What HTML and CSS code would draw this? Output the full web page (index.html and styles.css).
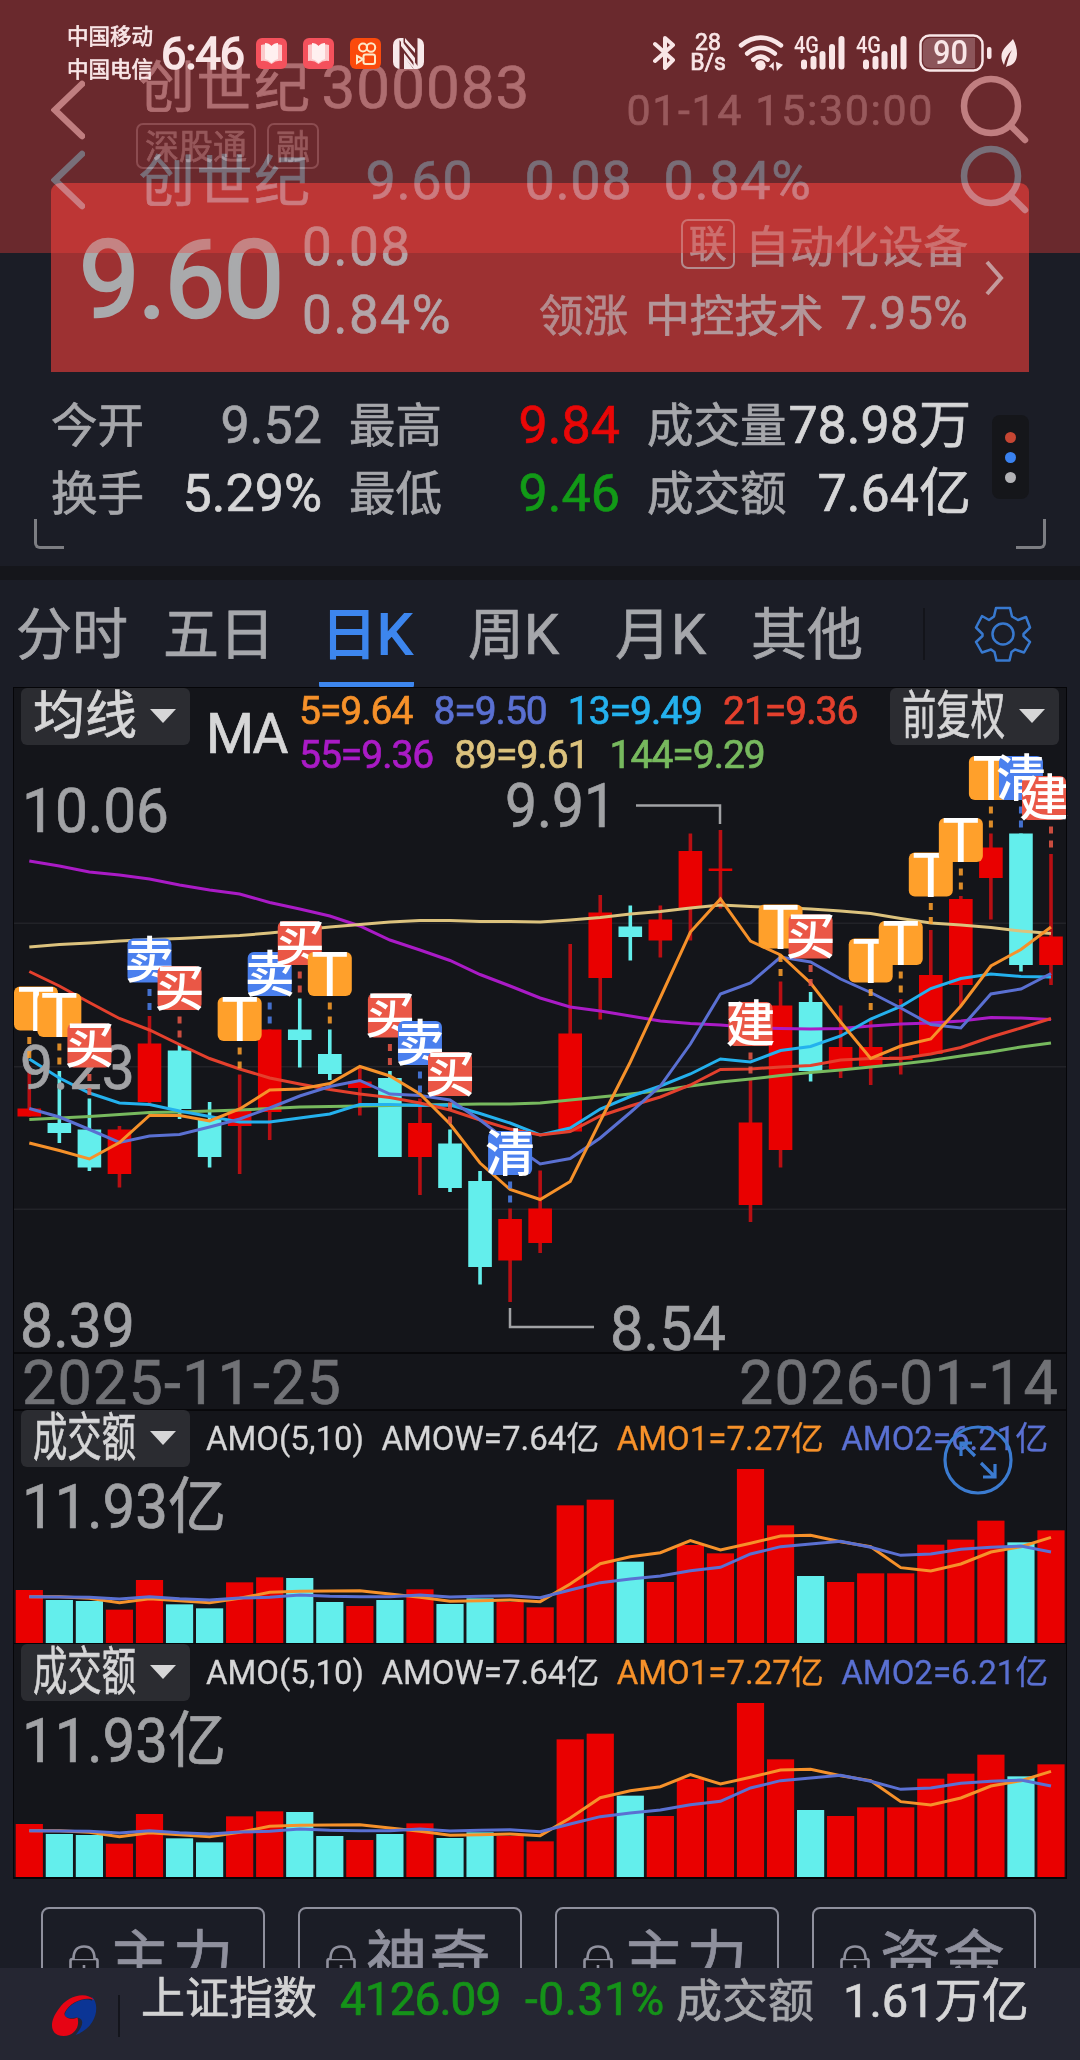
FILE: index.html
```html
<!DOCTYPE html>
<html lang="zh-CN">
<head>
  <meta charset="UTF-8">
  <title>创世纪 300083</title>
  <link rel="stylesheet" href="styles.css">
</head>
<body>
  <div class="statusbar">
    <div class="carriers"><span>中国移动</span><span>中国电信</span></div>
    <span class="clock">6:46</span>
    <div class="apps">
      <svg class="app" viewBox="0 0 31 31"><rect width="31" height="31" rx="6" fill="#f4515c"/><path d="M5 7 Q11 5 15.5 8 Q20 5 26 7 V23 Q20 22 15.5 26 Q11 22 5 23Z" fill="#fcc9cb"/><path d="M9 5 Q13 5 15.5 8 Q18 5 22 5 V21 Q18 22 15.5 25 Q13 22 9 21Z" fill="#fff0f0"/></svg>
      <svg class="app" viewBox="0 0 31 31"><rect width="31" height="31" rx="6" fill="#f4515c"/><path d="M5 7 Q11 5 15.5 8 Q20 5 26 7 V23 Q20 22 15.5 26 Q11 22 5 23Z" fill="#fcc9cb"/><path d="M9 5 Q13 5 15.5 8 Q18 5 22 5 V21 Q18 22 15.5 25 Q13 22 9 21Z" fill="#fff0f0"/></svg>
      <svg class="app" viewBox="0 0 31 31"><rect width="31" height="31" rx="6" fill="#fb4a0c"/><g fill="none" stroke="#fde9c8" stroke-width="2"><circle cx="13" cy="9.5" r="4"/><circle cx="21" cy="9.5" r="4.2"/><rect x="13.500" y="16.500" width="11.500" height="9.500" rx="2"/><path d="M7 18 L13 21 L7 25Z"/></g></svg>
      <svg class="app nfc" viewBox="0 0 31 31"><rect width="31" height="31" rx="7" fill="#f7e9ea"/><path d="M6.500 2 L20.500 21 V31 L11 18 V31 H6.500Z" fill="#6a2a2e"/><path d="M10.500 0 H24.500 V28 L10.500 8Z" fill="#6a2a2e"/><path d="M8 2 L22 20 V26 L8 8Z M12 0 L22 11 V15 L12 4Z M11 15 L21 28 V31 L11 19Z" fill="#f7e9ea"/></svg>
    </div>
    <div class="signals">
      <svg class="bt" viewBox="0 0 22 36"><path d="M2 9 L20 25 L12 33 V3 L20 10 L2 26" fill="none" stroke="#f9e6e7" stroke-width="4" stroke-linejoin="round" stroke-linecap="round"/></svg>
      <div class="speed"><span>28</span><span>B/s</span></div>
      <svg class="wifi" viewBox="0 0 45 35"><g fill="none" stroke="#f9e6e7" stroke-width="4.500" stroke-linecap="round"><path d="M3 10 Q22 -5 42 10"/><path d="M9 18 Q22 7 36 18"/><path d="M15 24 Q22 18 29 24"/></g><circle cx="22" cy="29.500" r="5" fill="#f9e6e7"/><path d="M30 31 L35 26 V35 L33 32Z M37 26 L44 29 L38 35Z" fill="#f9e6e7"/></svg>
      <svg class="cell" viewBox="0 0 52 36"><text x="0" y="18" textLength="25" lengthAdjust="spacingAndGlyphs">4G</text><path d="M10 27.500V31.500 M19.500 24V31.500 M28.500 19V31.500 M38 12V31.500 M47.500 4V31.500" stroke="#f9e6e7" stroke-width="6" stroke-linecap="round"/></svg>
      <svg class="cell" viewBox="0 0 52 36"><text x="0" y="18" textLength="25" lengthAdjust="spacingAndGlyphs">4G</text><path d="M10 27.500V31.500 M19.500 24V31.500 M28.500 19V31.500 M38 12V31.500 M47.500 4V31.500" stroke="#f9e6e7" stroke-width="6" stroke-linecap="round"/></svg>
      <svg class="battery" viewBox="0 0 74 38"><rect x="1.500" y="1.500" width="62" height="35" rx="9" fill="none" stroke="#f9e6e7" stroke-width="2.500"/><path d="M12 4 H56 V34 H12 Q4 34 4 26 V12 Q4 4 12 4" fill="#8c555a"/><text x="14" y="30" textLength="35" lengthAdjust="spacingAndGlyphs">90</text><rect x="68" y="13" width="4.500" height="12" rx="2" fill="#f9e6e7"/></svg>
      <svg class="leaf" viewBox="0 0 18 30"><path d="M13 1 C19 12 19 26 8 28 L6 29 C8 22 9 17 12 12 C7 17 5 22 4 27 C-3 14 6 9 13 1Z" fill="#f9e6e7"/></svg>
    </div>
  </div>

  <div class="titlebar">
    <svg class="back" viewBox="0 0 34 60"><path d="M31 4 L4 30 L31 56"/></svg>
    <div class="name-box">
      <div class="name">创世纪<span class="code">300083</span></div>
      <div class="tags"><span class="tag">深股通</span><span class="tag">融</span></div>
    </div>
    <span class="datetime">01-14 15:30:00</span>
    <svg class="search" viewBox="0 0 70 70"><circle cx="31" cy="31" r="27"/><path d="M51 51 L65 65"/></svg>
  </div>

  <div class="titlebar ghost">
    <svg class="back" viewBox="0 0 34 60"><path d="M31 4 L4 30 L31 56"/></svg>
    <div class="name">创世纪</div>
    <div class="quick"><span>9.60</span><span>0.08</span><span>0.84%</span></div>
    <svg class="search" viewBox="0 0 70 70"><circle cx="31" cy="31" r="27"/><path d="M51 51 L65 65"/></svg>
  </div>

  <div class="tint"></div>

  <section class="quote">
    <div class="price-card">
      <span class="price">9.60</span>
      <div class="change"><span>0.08</span><span>0.84%</span></div>
      <div class="sector">
        <div class="sector-row"><span class="link-tag">联</span><span class="sector-name">自动化设备</span></div>
        <div class="sector-row"><span>领涨</span><span class="leader">中控技术</span><span class="leader pct">7.95%</span></div>
      </div>
      <svg class="more" viewBox="0 0 20 38"><path d="M3 3 L17 19 L3 35"/></svg>
    </div>

    <div class="stats">
      <div class="stat-grid">
        <span>今开</span><b class="dim">9.52</b><span>最高</span><b class="up">9.84</b><span>成交量</span><b>78.98万</b>
        <span>换手</span><b>5.29%</b><span>最低</span><b class="down">9.46</b><span>成交额</span><b>7.64亿</b>
      </div>
      <div class="dots"><i class="dot red"></i><i class="dot blue"></i><i class="dot gray"></i></div>
    </div>
    <div class="corners"><i class="corner left"></i><i class="corner right"></i></div>
  </section>

  <nav class="tabs">
    <span class="tab">分时</span>
    <span class="tab">五日</span>
    <span class="tab active">日K</span>
    <span class="tab">周K</span>
    <span class="tab">月K</span>
    <span class="tab">其他</span>
    <i class="tab-line"></i>
    <svg class="gear" viewBox="-30 -30 60 60"><path d="M-7 -26 H7 L9 -17.500 L15 -14 L23 -17 L27 -6.500 L20.500 0 L20.500 2 L27 8 L21 18.500 L12 15.500 L8.500 18 L6.500 26.500 H-6.500 L-8.500 18 L-12 15.500 L-21 18.500 L-27 8 L-20.500 2 V0 L-27 -6.500 L-21 -18 L-14 -14 L-9 -17.500Z"/><circle r="10.500"/></svg>
  </nav>

  <main class="charts">
    <div class="kline">
      <div class="toolbar">
        <div class="select"><span>均线</span><i class="caret"></i></div>
        <span class="ma">MA</span>
        <div class="legend">
          <div class="legend-row"><span class="m5">5=9.64</span><span class="m8">8=9.50</span><span class="m13">13=9.49</span><span class="m21">21=9.36</span></div>
          <div class="legend-row"><span class="m55">55=9.36</span><span class="m89">89=9.61</span><span class="m144">144=9.29</span></div>
        </div>
        <div class="select adjust"><span class="squeeze">前复权</span><i class="caret"></i></div>
      </div>
      <svg id="kline" class="plot" width="1052" height="573" viewBox="14 779 1052 573"></svg>
      <div class="dates"><span>2025-11-25</span><span>2026-01-14</span></div>
    </div>

    <div class="volume">
      <div class="toolbar">
        <div class="select"><span class="squeeze">成交额</span><i class="caret"></i></div>
        <div class="amo"><span>AMO(5,10)</span><span>AMOW=7.64亿</span><span class="m5">AMO1=7.27亿</span><span class="m8">AMO2=6.21亿</span></div>
      </div>
      <svg class="plot amount" width="1052" height="175" viewBox="14 1469 1052 175"></svg>
      <svg class="expand" viewBox="-35 -35 70 70"><circle r="33"/><path d="M-3 -4 L-16 -17 M-17 -4 V-17 H-6 M3 3 L17 17 M17 4 V17 H5"/></svg>
    </div>

    <div class="volume">
      <div class="toolbar">
        <div class="select"><span class="squeeze">成交额</span><i class="caret"></i></div>
        <div class="amo"><span>AMO(5,10)</span><span>AMOW=7.64亿</span><span class="m5">AMO1=7.27亿</span><span class="m8">AMO2=6.21亿</span></div>
      </div>
      <svg class="plot amount" width="1052" height="175" viewBox="14 1469 1052 175"></svg>
    </div>
  </main>

  <div class="locked">
    <div class="lock-btn"><svg class="lock" viewBox="0 0 30 40"><rect x="1.500" y="14" width="27" height="24" rx="2"/><path d="M4.500 14 Q4.500 1.500 15 1.500 Q25.500 1.500 25.500 14 M15 20 V29"/></svg><span>主力</span></div>
    <div class="lock-btn"><svg class="lock" viewBox="0 0 30 40"><rect x="1.500" y="14" width="27" height="24" rx="2"/><path d="M4.500 14 Q4.500 1.500 15 1.500 Q25.500 1.500 25.500 14 M15 20 V29"/></svg><span>神奇</span></div>
    <div class="lock-btn"><svg class="lock" viewBox="0 0 30 40"><rect x="1.500" y="14" width="27" height="24" rx="2"/><path d="M4.500 14 Q4.500 1.500 15 1.500 Q25.500 1.500 25.500 14 M15 20 V29"/></svg><span>主力</span></div>
    <div class="lock-btn"><svg class="lock" viewBox="0 0 30 40"><rect x="1.500" y="14" width="27" height="24" rx="2"/><path d="M4.500 14 Q4.500 1.500 15 1.500 Q25.500 1.500 25.500 14 M15 20 V29"/></svg><span>资金</span></div>
  </div>

  <footer class="index-bar">
    <svg class="logo" viewBox="0 0 48 44"><path d="M42 3 C50 10 48 34 25 42 C33 33 35 25 26 24 C19 25 14 25 14 21 C16 12 32 2 42 7Z" fill="#0b3595"/><path d="M44 6 C36 -3 17 1 8 15 C-3 29 -1 43 13 43 C23 43 30 34 27 24 C22 27 12 25 14 19 C19 8 35 2 44 6Z" fill="#e60414"/></svg>
    <i class="bar-line"></i>
    <span class="index-name">上证指数</span>
    <span class="index-value">4126.09</span>
    <span class="index-pct">-0.31%</span>
    <span class="index-label">成交额</span>
    <span class="index-amount">1.61万亿</span>
  </footer>

  <script src="chart.js"></script>
</body>
</html>
```
FILE: styles.css
```css
* {
  box-sizing: border-box;
}

body {
  margin: 0;
  width: 1080px;
  height: 2060px;
  position: relative;
  overflow: hidden;
  display: flex;
  flex-direction: column;
  background: #1b1d26;
  color: #a6a7ab;
  font-family: Roboto, "Noto Sans CJK SC", sans-serif;
  -webkit-text-stroke: 0.7px currentColor;
  white-space: nowrap;
}

svg {
  display: block;
  flex: none;
  -webkit-text-stroke: 0;
}

i {
  display: block;
}

/* status bar */
.statusbar {
  position: absolute;
  top: 0;
  left: 0;
  right: 0;
  height: 106px;
  padding-left: 67px;
  display: flex;
  align-items: center;
  color: #f9e6e7;
  z-index: 4;
}

.carriers {
  display: flex;
  flex-direction: column;
  width: 94px;
  font-size: 21.5px;
  line-height: 33px;
}

.clock {
  width: 95px;
  font-size: 45px;
  letter-spacing: -0.9px;
  -webkit-text-stroke: 1.6px currentColor;
}

.apps {
  display: flex;
  gap: 16px;
}

.app {
  width: 31px;
  height: 31px;
}

.nfc {
  margin-left: -4px;
}

.signals {
  display: flex;
  align-items: center;
  margin-left: auto;
  width: 427px;
}

.bt {
  width: 22px;
  height: 36px;
}

.speed {
  display: flex;
  flex-direction: column;
  align-items: center;
  width: 36px;
  margin: 0 12px 0 15px;
  font-size: 23px;
  line-height: 20px;
}

.wifi {
  width: 46px;
  height: 36px;
}

.cell {
  width: 52px;
  height: 36px;
  margin-left: 10px;
  overflow: visible;
}

.cell text {
  font-size: 24px;
  font-weight: 500;
  fill: #f9e6e7;
}

.battery {
  width: 74px;
  height: 38px;
  margin-left: 11px;
}

.battery text {
  font-size: 33px;
  font-weight: 500;
  fill: #f9e6e7;
}

.leaf {
  width: 18px;
  height: 30px;
  margin-left: 7px;
}

/* title bars, the second one slides over the first */
.titlebar {
  position: absolute;
  top: 50px;
  left: 0;
  right: 0;
  height: 120px;
  padding: 0 50px 0 51px;
  display: flex;
  align-items: center;
  color: #ae6d70;
  z-index: 3;
}

.back {
  width: 34px;
  height: 60px;
}

.back path,
.search circle,
.search path {
  fill: none;
  stroke: #c07e80;
  stroke-width: 6.5;
  stroke-linecap: round;
}

.name-box {
  margin-left: 51px;
  height: 120px;
}

.name {
  display: flex;
  height: 73px;
  line-height: 76px;
  font-size: 56px;
  letter-spacing: 1.5px;
  margin-left: 3px;
}

.code {
  font-size: 60px;
  letter-spacing: 1.1px;
  margin-left: 10px;
}

.tags {
  display: flex;
  gap: 11px;
  color: #96575a;
}

.tag {
  height: 46px;
  padding: 0 7px;
  border: 2px solid #8c4c50;
  border-radius: 7px;
  font-size: 34px;
  line-height: 45px;
}

.datetime {
  margin-left: auto;
  margin-right: 26px;
  font-size: 43px;
  letter-spacing: 1.6px;
  color: #98595c;
}

.search {
  width: 70px;
  height: 70px;
}

.ghost {
  top: 120px;
  color: rgb(15, 68, 74);
  mix-blend-mode: plus-lighter;
}

.ghost .back path,
.ghost .search circle,
.ghost .search path {
  stroke: rgb(14, 70, 76);
}

.ghost .name {
  margin-left: 54px;
}

.quick {
  display: flex;
  margin-left: 54px;
  font-size: 54px;
  letter-spacing: 0.6px;
}

.quick span {
  width: 159px;
}

.quick span:nth-child(2) {
  width: 139px;
}

.ghost .search {
  margin-left: auto;
}

.tint {
  position: absolute;
  top: 0;
  left: 0;
  right: 0;
  height: 253px;
  background: rgba(246, 65, 58, 0.36);
  z-index: 2;
}

/* quote */
.quote {
  height: 566px;
  padding: 183px 34px 0;
}

.price-card {
  height: 189px;
  margin: 0 17px;
  padding: 0 25px 0 28px;
  display: flex;
  background: #9d3132;
  border-radius: 9px 9px 0 0;
}

.price {
  width: 223px;
  font-size: 108px;
  line-height: 194px;
  letter-spacing: -1.8px;
  color: #a9aaac;
  -webkit-text-stroke: 2.5px currentColor;
}

.change {
  display: flex;
  flex-direction: column;
  padding-top: 30px;
  font-size: 53px;
  line-height: 68px;
  letter-spacing: 1.6px;
  color: #b3a5a9;
}

.sector {
  margin-left: auto;
  padding-top: 27px;
  color: #b48b8e;
}

.sector-row {
  display: flex;
  align-items: center;
  justify-content: flex-end;
  height: 70px;
  font-size: 44.6px;
}

.sector-row:first-child {
  height: 67px;
}

.link-tag {
  width: 54px;
  height: 50px;
  margin-right: 10px;
  border: 2px solid #b48b8e;
  border-radius: 7px;
  font-size: 38px;
  line-height: 47px;
  text-align: center;
}

.leader {
  margin-left: 17px;
  color: #b3979a;
}

.pct {
  font-size: 47px;
  letter-spacing: 0.3px;
}

.more {
  width: 20px;
  height: 38px;
  margin: 76px 0 0 16px;
}

.more path {
  fill: none;
  stroke: #c49a9c;
  stroke-width: 4;
}

.stats {
  display: flex;
  justify-content: space-between;
  height: 127px;
  margin: 20px 17px 0;
}

.stat-grid {
  display: grid;
  grid-template-columns: 100px 171px 124px 174px 168px 183px;
  grid-auto-rows: 68px;
  align-items: center;
  font-size: 46.5px;
  line-height: 70px;
}

.stat-grid b {
  font-size: 52px;
  font-weight: 400;
  line-height: 68px;
  color: #d6d6d7;
  text-align: right;
}

.stat-grid span:nth-of-type(3n+2),
.stat-grid span:nth-of-type(3n) {
  padding-left: 27px;
}

.stat-grid .dim {
  color: #a6a7ab;
}

.stat-grid .up {
  color: #e90707;
}

.stat-grid .down {
  color: #129a17;
}

.dots {
  display: flex;
  flex-direction: column;
  align-items: center;
  justify-content: center;
  gap: 9px;
  width: 37px;
  height: 84px;
  margin-top: 23px;
  border-radius: 8px;
  background: #15161a;
}

.dot {
  width: 11px;
  height: 11px;
  border-radius: 50%;
}

.dot.red {
  background: #c64633;
}

.dot.blue {
  background: #3a82f0;
}

.dot.gray {
  background: #b3b3b6;
}

.corners {
  display: flex;
  justify-content: space-between;
}

.corner {
  width: 30px;
  height: 30px;
  border: solid #7c7d82;
  border-width: 0 0 3px 3px;
  border-radius: 0 0 0 6px;
}

.corner.right {
  border-width: 0 3px 3px 0;
  border-radius: 0 0 6px 0;
}

/* period tabs */
.tabs {
  flex: none;
  height: 122px;
  border-top: 14px solid #15161b;
  padding-left: 16px;
  display: flex;
  align-items: center;
  font-size: 56px;
}

.tab {
  width: 147px;
  height: 108px;
  line-height: 111px;
}

.tab.active {
  width: 95px;
  margin: 0 54px 0 9px;
  padding-left: 2px;
  color: #3d86ee;
  border-bottom: 6px solid #3d86ee;
  border-radius: 3px;
  -webkit-text-stroke: 1.8px currentColor;
}

.tab:nth-child(5) {
  width: 136px;
}

.tab-line {
  width: 2px;
  height: 52px;
  margin-left: 25px;
  background: #13141a;
}

.gear {
  width: 60px;
  height: 60px;
  margin-left: 48px;
}

.gear path,
.gear circle {
  fill: none;
  stroke: #3879cf;
  stroke-width: 2.5;
  stroke-linejoin: round;
}

/* charts */
.charts {
  margin: 0 14px;
  background: #14151a;
  outline: 1px solid #050508;
}

.kline {
  height: 722px;
}

.toolbar {
  display: flex;
  height: 91px;
  padding: 0 7px;
}

.select {
  display: flex;
  align-items: center;
  justify-content: space-between;
  width: 169px;
  height: 57px;
  padding: 0 14px 0 12px;
  border-radius: 6px;
  background: #2b2c31;
  color: #d6d6d7;
  font-size: 52px;
  line-height: 57px;
}

.squeeze {
  width: 103px;
  transform: scaleX(0.66);
  transform-origin: left;
}

.adjust {
  margin-left: auto;
}

.caret {
  margin-bottom: 2px;
  border: 13px solid transparent;
  border-top: 14px solid #d6d6d7;
  border-bottom: 0;
}

.ma {
  width: 92px;
  padding-left: 16px;
  font-size: 55px;
  line-height: 92px;
  letter-spacing: -2px;
  color: #d6d6d7;
}

.legend {
  padding: 1px 0 0 17px;
}

.legend-row {
  display: flex;
  gap: 21px;
  height: 44px;
  font-size: 39px;
  line-height: 44px;
  letter-spacing: -1px;
}

.m5 { color: #f6912a; }
.m8 { color: #5a70d2; }
.m13 { color: #24b1ee; }
.m21 { color: #e4402d; }
.m55 { color: #aa1bc6; }
.m89 { color: #dcc27d; }
.m144 { color: #77b95e; }

.plot {
  overflow: visible;
  font-size: 61px;
  fill: #a1a2a5;
}

.mark {
  font-size: 50px;
  font-weight: 500;
  fill: #fff;
}

.mark.t {
  font-size: 62px;
  font-weight: 400;
}

.dates {
  display: flex;
  justify-content: space-between;
  padding: 0 7px 0 8px;
  height: 59px;
  border-top: 2px solid #08080b;
  border-bottom: 2px solid #08080b;
  font-size: 61px;
  line-height: 59px;
  letter-spacing: 1.2px;
  color: #717276;
}

.volume {
  position: relative;
  height: 234px;
  border-bottom: 1px solid #050508;
}

.volume .toolbar {
  height: 59px;
}

.amo {
  display: flex;
  gap: 17.5px;
  padding-left: 16px;
  font-size: 33px;
  line-height: 57px;
  color: #d6d6d7;
  -webkit-text-stroke: 0.3px currentColor;
}

.expand {
  position: absolute;
  left: 929px;
  top: 15px;
  width: 70px;
  height: 70px;
}

.expand circle,
.expand path {
  fill: none;
  stroke: #3b7bd0;
  stroke-width: 3.2;
}

/* locked indicators */
.locked {
  display: flex;
  gap: 33px;
  height: 90px;
  padding: 29px 41px 0;
  overflow: hidden;
}

.lock-btn {
  display: flex;
  align-items: flex-start;
  width: 224px;
  flex: none;
  height: 100px;
  padding: 0 0 0 26px;
  border: 2px solid #8f909d;
  border-radius: 8px;
  color: #8f909d;
  font-size: 61px;
  line-height: 102px;
  letter-spacing: 2.5px;
}

.lock {
  width: 30px;
  height: 40px;
  margin: 36px 12px 0 0;
}

.lock + span {
  margin-left: -2px;
}

.lock rect,
.lock path {
  fill: #17181f;
  stroke: #8f909d;
  stroke-width: 2.6;
}

/* index bar */
.index-bar {
  flex: 1;
  display: flex;
  align-items: flex-start;
  padding-left: 51px;
  background: #252632;
  font-size: 46px;
  line-height: 62px;
}

.logo {
  width: 47px;
  height: 43px;
  margin-top: 26px;
}

.bar-line {
  width: 2px;
  height: 42px;
  margin: 27px 21px 0 20px;
  background: #14151c;
}

.index-name {
  width: 199px;
  font-size: 44px;
  color: #d2d2d3;
}

.index-value {
  width: 185px;
  letter-spacing: -1px;
  color: #159219;
}

.index-pct {
  width: 151px;
  letter-spacing: 0.6px;
  color: #159219;
}

.index-label {
  width: 167px;
  line-height: 67px;
}

.index-amount {
  line-height: 66px;
  font-size: 47px;
  color: #d6d6d7;
}
```
FILE: chart.js
```js
const RED = "#e90000";
const CYAN = "#63eeec";
const STEP = 30.05;
const x = i => 29.3 + i * STEP;

// up/down, high, body top, body bottom, low
const candles = [
  ["r",1066,1108.500,1116.500,1116.500],["c",1071,1123,1133,1143],["c",1098.500,1129.500,1167.500,1171],["r",1126,1129.500,1174,1187.500],
  ["r",1016,1043.500,1102,1106],["c",1045,1050.500,1109,1119],["c",1102,1119,1157,1167.500],["r",1074.500,1109,1126,1174],
  ["r",1029.500,1029.500,1112,1140],["c",998.500,1029.500,1040,1067.500],["c",1029.500,1054,1074,1080],["r",1068,1081.500,1088,1115.500],
  ["c",1071,1078,1157,1157],["r",1098.500,1123,1157,1195],["c",1129.500,1143.500,1188,1192],["c",1171,1181,1267,1284.500],
  ["r",1208.500,1219,1260.500,1302],["r",1170.500,1208.500,1243,1253],["r",944,1033.500,1131.500,1131.500],["r",895,912.500,978,1019.500],
  ["c",905.500,926.500,937,960.500],["r",905.500,919.500,940.500,957.500],["r",833.500,851,908,940.500],["r",830,868.500,871,908.500],
  ["r",1079.500,1122.500,1205,1222],["r",981.500,1005.500,1150,1167.500],["c",992,1002,1071,1081.500],["r",1005.500,1047,1069,1078],
  ["r",1020,1047,1066,1085],["r",999,1056.500,1060,1074.500],["r",930,975,1054,1054],["r",896,899,985,1006],
  ["r",833.500,847.500,878,919.500],["c",833.500,833.500,965,971.500],["r",854,936.500,965,985]
];

const averages = [
  ["#aa1bc6", [861,866,872,875,879,885,890,894,902.500,909,916,926,940,950,960.500,974.500,986,998,1007,1011,1016,1021,1023.500,1025,1027.500,1028.500,1029,1028.500,1026,1024,1023,1021,1017.500,1018,1019.500]],
  ["#dcc27d", [947,944.500,943,941,939.500,938.500,937,935.500,933,930,927,924.500,922,920.500,920.500,921.500,921.500,922,920,917.500,914,911.500,908,905,906.500,907.500,909,911,913.500,918.500,923,925,927.500,931,933.500]],
  ["#77b95e", [1119.500,1118,1116.500,1114.500,1112.500,1112,1111,1110,1108.500,1107,1106.500,1106,1105.500,1105,1104.500,1104,1104,1103,1100,1097,1094,1090.500,1086,1082,1079,1075.500,1072.500,1070,1067,1064,1060.500,1056,1052,1047,1043]],
  ["#24b1ee", [1059,1078,1093,1103,1104.500,1111,1116.500,1122,1122,1118,1114,1104.500,1104.500,1105.500,1105,1113.500,1123,1135,1128,1109,1096.500,1086,1074,1059,1062,1050.500,1046.500,1036,1019,1006.500,988.500,978.500,974,976.500,977]],
  ["#e4402d", [971.500,986,1002.500,1018.500,1030,1044.500,1058.500,1069,1078,1084,1089.500,1094,1097.500,1103,1110,1120,1129,1135,1131.500,1116,1106,1097,1085,1069.500,1069,1067,1065.500,1060,1058.500,1058.500,1054,1047.500,1037,1028,1018.500]],
  ["#5a70d2", [1108.500,1117,1129.500,1142.500,1136,1134.500,1127,1119,1108,1096,1086.500,1080.500,1094,1095.500,1100,1120,1143,1164,1158.500,1138,1112.500,1086,1044,994,983,957,962,979,992.500,1008,1024.500,1028,994,989,973.500]],
  ["#f6912a", [1143,1150.500,1159,1142.500,1115.500,1115.500,1121,1109,1090,1089,1083.500,1066.500,1076,1094,1124,1163,1189.500,1199.500,1181.500,1121,1062,997.500,932,899,941,955,983,1022,1058.500,1046,1039,1006,966,949.500,927]]
];

// index, label, box top
const marks = [
  [0,"T",986.500],[1,"T",993],[2,"买",1023.500],[4,"卖",938.500],[5,"买",966],[7,"T",997],[8,"卖",952],[9,"买",921],[10,"T",952],
  [12,"买",993.500],[13,"卖",1021],[14,"买",1052],[16,"清",1131],[24,"建",1002],[25,"T",904.500],[26,"买",914.500],[28,"T",938.500],
  [29,"T",921],[30,"T",852.500],[31,"T",818],[32,"T",756],[33,"清",756],[34,"建",776]
];
const markColor = { T: "#ffa02b", 买: "#ea5746", 建: "#ea5746", 卖: "#4b80ee", 清: "#4b80ee" };

const amounts = [
  "r630","c660","c663","r689","r600","c673","c685","r607","r592","c594","c666","r678","c660","r628","c672","c655","r666","r682",
  "r376","r359","c545","r606","r495","r520","r267","r436","c588","r606","r580","r580","r494","r479","r422","c487","r451"
];
const amo5 = [650,650,655,668,656,662,668,655,637,634,633,632,642,652,664,662,660,665,612,551,530,518,482,510,490,468,466,485,500,563,573,552,516,500,472];
const amo10 = [650,651,652,657,650,656,660,654,652,645,649,650,650,645,651,649,647,653,630,608,597,588,572,562,522,500,492,484,502,526,522,508,502,498,516];

function rect(left, top, w, h, fill, extra = "") {
  return `<rect x="${left}" y="${top}" width="${w}" height="${h}" fill="${fill}" ${extra}/>`;
}

function polyline(values, color) {
  const points = values.map((y, i) => `${x(i)},${y}`).join(" ");
  return `<polyline points="${points}" fill="none" stroke="${color}" stroke-width="3"/>`;
}

function label(left, base, width, text) {
  return `<text x="${left}" y="${base}" textLength="${width}" lengthAdjust="spacingAndGlyphs" stroke="#a1a2a5" stroke-width=".7">${text}</text>`;
}

function drawKline() {
  let out = "";
  [922.500, 1066, 1208.500].forEach(y => out += rect(14, y, 1052, 1.500, "#222328"));
  candles.forEach(([type, high, top, bottom, low], i) => {
    const color = type === "r" ? RED : CYAN;
    out += rect(x(i) - 1.800, high, 3.600, low - high, type === "r" ? "#b80f13" : CYAN);
    out += rect(x(i) - 11.800, top, 23.600, bottom - top, color);
  });
  averages.forEach(([color, values]) => out += polyline(values, color));

  out += label(22, 832, 147, "10.06");
  out += label(20, 1089, 115, "9.23");
  out += label(20, 1347, 115, "8.39");
  out += label(505, 827, 111, "9.91");
  out += label(610, 1350, 116, "8.54");
  out += `<path d="M636 805.500 H720 V824 M510 1308 V1327 H594" fill="none" stroke="#a1a2a5" stroke-width="2.500"/>`;

  marks.forEach(([i, text, top]) => {
    const left = Math.min(Math.max(x(i) - 22, 14), 1022);
    const color = markColor[text];
    out += rect(x(i) - 2, top + 50.500, 4, 7, color, 'opacity=".85"');
    out += rect(x(i) - 2, top + 64.500, 4, 7, color, 'opacity=".85"');
    out += rect(left, top, 44, 44, color, 'rx="6"');
    const base = text === "T" ? top + 44 : top + 39.500;
    out += `<text class="mark ${text === "T" ? "t" : ""}" x="${left + 22}" y="${base}" text-anchor="middle">${text}</text>`;
  });
  document.getElementById("kline").innerHTML = out;
}

function drawAmount(svg) {
  const y = v => 1380 + v / 3;
  let out = label(22, 1528, 204, "11.93亿");
  amounts.forEach((item, i) => {
    const top = y(Number(item.slice(1)));
    out += rect(x(i) - 13.600, top, 27.200, 1643 - top, item[0] === "r" ? RED : CYAN);
  });
  out += polyline(amo5.map(y), "#f6912a") + polyline(amo10.map(y), "#5a70d2");
  svg.innerHTML = out;
}

drawKline();
document.querySelectorAll(".amount").forEach(drawAmount);
```
